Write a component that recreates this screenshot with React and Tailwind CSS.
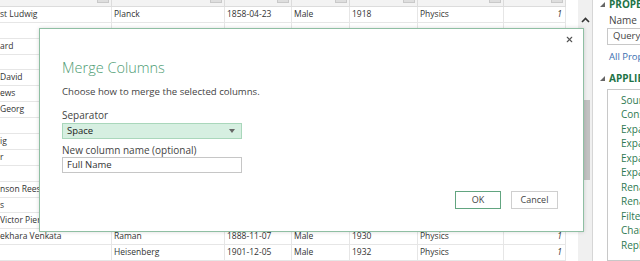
import { X } from "lucide-react";

const font = { fontFamily: '"Segoe UI", "Open Sans", "Noto Sans", sans-serif' };

const cols = [
  { w: "w-[112px]", right: false },
  { w: "w-[113px]", right: false },
  { w: "w-[67px]", right: false },
  { w: "w-[58px]", right: false },
  { w: "w-[68px]", right: false },
  { w: "w-[86px]", right: false },
  { w: "w-[62px]", right: true },
];

const rows = [
  ["st Ludwig", "Planck", "1858-04-23", "Male", "1918", "Physics", "1"],
  ["", "", "", "", "", "", ""],
  ["ard", "", "", "", "", "", ""],
  ["", "", "", "", "", "", ""],
  ["David", "", "", "", "", "", ""],
  ["ews", "", "", "", "", "", ""],
  ["Georg", "", "", "", "", "", ""],
  ["", "", "", "", "", "", ""],
  ["ig", "", "", "", "", "", ""],
  ["r", "", "", "", "", "", ""],
  ["", "", "", "", "", "", ""],
  ["nson Rees", "", "", "", "", "", ""],
  ["s", "", "", "", "", "", ""],
  ["Victor Pierre", "", "", "", "", "", ""],
  ["ekhara Venkata", "Raman", "1888-11-07", "Male", "1930", "Physics", "1"],
  ["", "Heisenberg", "1901-12-05", "Male", "1932", "Physics", "1"],
];

const steps = ["Source", "Constants", "Expanded", "Expanded", "Expanded", "Expanded", "Renamed", "Renamed", "Filtered", "Changed", "Replaced"];

function Grid() {
  return (
    <div className="flex flex-col w-[566px] shrink-0 overflow-hidden">
      {/* header strip */}
      <div className="flex h-[7px] bg-[#f3f3f3] border-b border-[#dcdcdc]">
        {cols.map((c, i) => (
          <div key={i} className={`${c.w} shrink-0 flex justify-end border-r border-[#dcdcdc] pr-[2px]`}>
            <div className="w-[12px] h-[3px] bg-[#dedede] border border-t-0 border-[#c9c9c9]" />
          </div>
        ))}
      </div>
      {rows.map((r, ri) => (
        <div key={ri} className="flex h-[16.35px] border-b border-[#e6e6e6] bg-white">
          {cols.map((c, ci) => (
            <div
              key={ci}
              className={`${c.w} shrink-0 border-r border-[#e6e6e6] flex items-center whitespace-nowrap overflow-hidden text-[8.5px] text-[#333] ${
                c.right ? "justify-end pr-[3px] italic" : ci === 0 ? "pl-0" : "pl-[2px]"
              }`}
            >
              {r[ci]}
            </div>
          ))}
        </div>
      ))}
    </div>
  );
}

function Scrollbar() {
  return (
    <div className="flex w-[27px] shrink-0">
      <div className="w-[12px] bg-white" />
      <div className="w-[15px] bg-[#f0f0f0] border-r border-[#d6d6d6] flex flex-col items-center">
        <svg width="9" height="6" viewBox="0 0 9 6" className="mt-[17px]">
          <path d="M1 5 L4.5 1.5 L8 5" fill="none" stroke="#333" strokeWidth="1.6" />
        </svg>
        <div className="mt-[77px] w-[9px] h-[80px] bg-[#c2c2c2]" />
      </div>
    </div>
  );
}

function Tri() {
  return (
    <svg width="5" height="5" viewBox="0 0 5 5" className="shrink-0">
      <path d="M5 0 L5 5 L0 5 Z" fill="#666" />
    </svg>
  );
}

function SidePane() {
  return (
    <div className="flex-1 bg-white flex flex-col pl-[7px] overflow-hidden whitespace-nowrap">
      <div className="flex items-center gap-[4px] h-[10px] -mt-[1px]">
        <Tri />
        <span className="text-[10px] font-bold text-[#217346]">PROPERTIES</span>
      </div>
      <div className="pl-[9px] mt-[5px] text-[10px] leading-[12px] text-[#444]">Name</div>
      <div className="ml-[7px] mt-[2px] h-[17px] border border-r-0 border-[#c8c8c8] flex items-center pl-[5px] text-[9.5px] text-[#444]">
        Query1
      </div>
      <div className="pl-[9px] mt-[6px] text-[9.5px] leading-[12px] text-[#3a6fb0]">All Properties</div>
      <div className="flex items-center gap-[4px] h-[12px] mt-[9px]">
        <Tri />
        <span className="text-[10px] font-bold text-[#217346]">APPLIED STEPS</span>
      </div>
      <div className="ml-[7px] mt-[5px] flex-1 border border-[#c8c8c8] border-r-0 pt-[3px] pl-[13px] flex flex-col">
        {steps.map((s, i) => (
          <div key={i} className="h-[14.5px] flex items-center text-[10px] text-[#2f7a52]">
            {s}
          </div>
        ))}
      </div>
    </div>
  );
}

function MergeDialog() {
  return (
    <div className="absolute left-[39px] top-[28px] w-[545px] h-[204px] bg-white border border-[#8fbfa3] shadow-[0_0_4px_rgba(0,0,0,0.15)] flex flex-col pt-[29px] pl-[22px] pr-[25px] pb-[22px]">
      <button className="absolute right-[9px] top-[6px] text-[#555]">
        <X className="w-[9px] h-[9px]" strokeWidth={3} />
      </button>
      <div className="text-[14.5px] leading-[20px] font-light text-[#4e9c73]">Merge Columns</div>
      <div className="mt-[6px] text-[9.6px] leading-[16px] text-[#444]">Choose how to merge the selected columns.</div>
      <div className="mt-[7px] text-[10px] leading-[16px] text-[#444]">Separator</div>
      <div className="w-[180px] h-[16px] bg-[#d6efe1] border border-[#a9d7bb] flex items-center justify-between pl-[4px] pr-[6px]">
        <span className="text-[9.5px] text-[#222]">Space</span>
        <svg width="6" height="4" viewBox="0 0 6 4">
          <path d="M0 0 L6 0 L3 4 Z" fill="#666" />
        </svg>
      </div>
      <div className="mt-[4px] text-[10px] leading-[14px] text-[#444]">New column name (optional)</div>
      <div className="w-[180px] h-[16px] border border-[#c6c6c6] flex items-center pl-[4px] text-[9.5px] text-[#333]">
        Full Name
      </div>
      <div className="mt-auto flex justify-end gap-[10px]">
        <button className="w-[46px] h-[18px] border-[1.5px] border-[#62a580] bg-white text-[9px] text-[#444]">OK</button>
        <button className="w-[47px] h-[18px] border border-[#cfcfcf] bg-white text-[9px] text-[#444]">Cancel</button>
      </div>
    </div>
  );
}

export default function App() {
  return (
    <div className="relative w-[640px] h-[261px] overflow-hidden bg-white flex" style={font}>
      <Grid />
      <Scrollbar />
      <SidePane />
      <MergeDialog />
    </div>
  );
}
